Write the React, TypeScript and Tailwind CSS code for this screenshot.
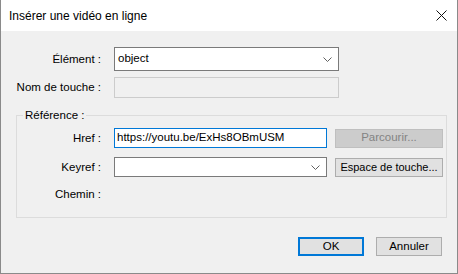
import React from 'react';

const label = "text-[11.5px] leading-[13px] text-black text-right";

function Chevron() {
  return (
    <svg width="9" height="5" viewBox="0 0 9 5" className="shrink-0">
      <path d="M0.5 0.5 L4.5 4.5 L8.5 0.5" fill="none" stroke="#606060" strokeWidth="1" />
    </svg>
  );
}

export default function App() {
  return (
    <div
      className="w-[458px] h-[274px] flex flex-col border-x border-b border-[#8a8a8a] bg-[#f0f0f0] text-black"
      style={{ fontFamily: '"Liberation Sans", Arial, sans-serif' }}
    >
      <div className="h-[31px] shrink-0 bg-white flex items-center justify-between pl-[8px] pr-[10px]">
        <span className="text-[12px] text-black">Insérer une vidéo en ligne</span>
        <svg width="11" height="11" viewBox="0 0 11 11">
          <path d="M0.5 0.5 L10.5 10.5 M10.5 0.5 L0.5 10.5" stroke="#111" strokeWidth="1" />
        </svg>
      </div>

      <div className="flex flex-col pt-[16px]">
        <div className="grid grid-cols-[100px_225px] gap-x-[13px] items-center">
          <span className={label}>Élément :</span>
          <div className="h-[24px] border border-[#7a7a7a] bg-white flex items-center justify-between pl-[3px] pr-[6px] text-[11.5px]">
            <span>object</span>
            <Chevron />
          </div>
        </div>

        <div className="grid grid-cols-[100px_225px] gap-x-[13px] items-center mt-[6px]">
          <span className={label}>Nom de touche :</span>
          <div className="h-[21px] border border-[#cccccc] bg-[#f0f0f0]" />
        </div>

        <div className="relative mt-[17px] ml-[15px] w-[431px] h-[103px] border border-[#dcdcdc] pt-[12px]">
          <span className="absolute -top-[7px] left-[6px] px-[2px] bg-[#f0f0f0] text-[11.5px] leading-[13px]">
            Référence :
          </span>

          <div className="grid grid-cols-[84px_213px_103px] gap-x-[13px] items-center">
            <span className={label}>Href :</span>
            <div className="h-[20px] border border-[#0078d7] bg-white flex items-center pl-[2px] text-[11.5px]">
              https://youtu.be/ExHs8OBmUSM
            </div>
            <div className="-ml-[5px] h-[19px] border border-[#bfbfbf] bg-[#cccccc] flex items-center justify-center text-[11.5px] text-[#838383]">
              Parcourir...
            </div>
          </div>

          <div className="grid grid-cols-[84px_213px_103px] gap-x-[13px] items-center mt-[9px]">
            <span className={label}>Keyref :</span>
            <div className="h-[20px] border border-[#7a7a7a] bg-white flex items-center justify-end pr-[6px]">
              <Chevron />
            </div>
            <div className="-ml-[5px] h-[19px] border border-[#adadad] bg-[#e1e1e1] flex items-center justify-center text-[11px] whitespace-nowrap">
              Espace de touche...
            </div>
          </div>

          <div className="grid grid-cols-[84px_213px] gap-x-[13px] items-center mt-[9px] h-[17px]">
            <span className={label}>Chemin :</span>
          </div>
        </div>

        <div className="flex justify-end gap-[12px] pr-[15px] mt-[19px]">
          <button className="w-[66px] h-[19px] border-2 border-[#0078d7] bg-[#e1e1e1] text-[11.5px] leading-none flex items-center justify-center">
            OK
          </button>
          <button className="w-[66px] h-[19px] border border-[#adadad] bg-[#e1e1e1] text-[11.5px] leading-none flex items-center justify-center">
            Annuler
          </button>
        </div>
      </div>
    </div>
  );
}
